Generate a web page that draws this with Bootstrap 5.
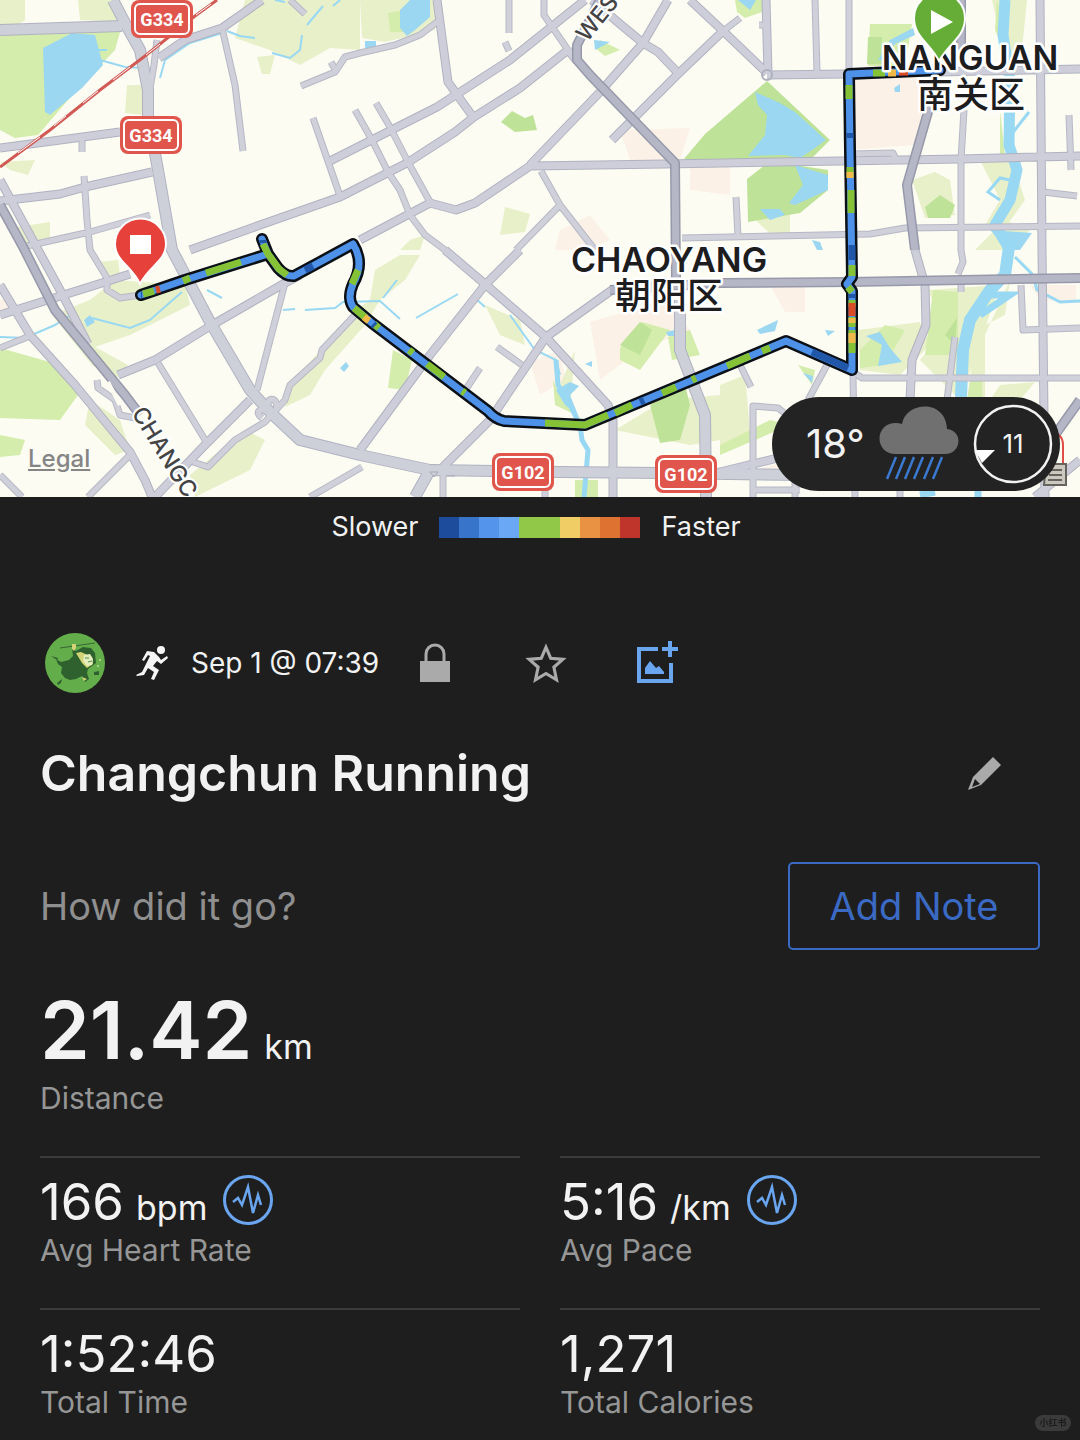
<!DOCTYPE html>
<html lang="en">
<head>
<meta charset="utf-8">
<meta name="viewport" content="width=device-width, initial-scale=1">
<title>Changchun Running</title>
<link href="https://cdn.jsdelivr.net/npm/bootstrap@5.3.0/dist/css/bootstrap.min.css" rel="stylesheet">
<style>
body { background: #1e1e1e; color: #f2f2f2; font-family: Inter, "Noto Sans CJK SC", sans-serif; }
svg { display: block; flex: none; }
.map-art { width: 100%; height: auto; }
.map-art text { font-family: Inter, "Noto Sans CJK SC", sans-serif; }
.place { font-size: 34px; font-weight: 600; fill: #1d1d1f; stroke: #fff; stroke-width: 5px; stroke-linejoin: round; paint-order: stroke; text-anchor: middle; }
.place-cn { font-size: 36px; font-weight: 500; }
.street { font-size: 23px; font-weight: 500; fill: #444; stroke: #fff; stroke-width: 4px; paint-order: stroke; }
.map-art .shield-text { font-family: Roboto, sans-serif; font-size: 18px; font-weight: 700; fill: #fff; text-anchor: middle; }
.legal { left: 28px; bottom: 24px; font-size: 24px; line-height: 28px; font-weight: 500; color: #858585; }
.weather { right: 20px; bottom: 6px; width: 288px; height: 94px; background: #232323; }
.temp { width: 73px; font-size: 40px; line-height: 48px; margin-left: 34px; }
.wind { margin-left: 14px; }
.speed-key { height: 60px; font-size: 27px; gap: 21px; padding-right: 8px; }
.speed-bar { width: 201px; height: 21px; }
.sheet { padding: 0 40px; }
.meta-row { height: 60px; margin-top: 76px; padding-left: 5px; }
.meta-sport { margin-left: 30px; }
.meta-date { font-size: 28px; line-height: 32px; width: 249px; padding-left: 20px; }
.icon-btn { background: none; border: 0; padding: 0; }
.star { margin-left: 75px; }
.photo { margin-left: 69px; }
.title { font-size: 50px; line-height: 60px; font-weight: 600; margin: 0; }
.title-row { margin-top: 50px; padding-right: 36px; }
.note-row { margin-top: 59px; font-size: 38px; }
.ask { color: #8f8f8f; }
.note-btn { --bs-btn-color: #3a6ac4; --bs-btn-border-color: #3a6ac4; --bs-btn-hover-color: #fff; --bs-btn-hover-bg: #3a6ac4; --bs-btn-border-radius: 5px; --bs-btn-border-width: 2px; width: 252px; height: 88px; font-size: 38px; padding: 0; }
.distance { margin-top: 36px; }
.distance-value { gap: 12px; }
.distance-value + .caption { margin-top: 7px; }
.big { font-size: 80px; line-height: 88px; font-weight: 600; }
.unit { font-size: 34px; line-height: 40px; }
.caption { font-size: 30px; line-height: 34px; color: #969696; }
.stats { --bs-gutter-x: 40px; margin-top: 41px; }
.stat { border-top: 2px solid #3c3c3c; height: 152px; padding-top: 13px; }
.value { font-size: 51px; line-height: 62px; }
.stat-line { height: 62px; gap: 12px; }
.stamp { right: 9px; bottom: 9px; width: 36px; height: 16px; font-size: 9px; line-height: 16px; background: #3b3b3b; color: #1c1c1c; font-weight: 700; }
</style>
<script src="https://cdn.jsdelivr.net/npm/bootstrap@5.3.0/dist/js/bootstrap.bundle.min.js"></script>
</head>
<body>
<section class="position-relative">
<svg class="map-art" viewBox="0 0 1080 497" role="img" aria-label="Route map">
<defs>
<g id="minor" fill="none" stroke-linejoin="round">
<path d="M157 40L154 65L148 100M243 151L235 85L222 28M82 138V152M84 176L87 220L90 250L107 278V290L120 298L140 295M27 246L90 232L150 215M313 118L340 196M301 86L335 72L345 57L360 53L395 45L420 35L437 22M331 62L336 71M290 0L305 14M509 0V33M505 42L509 51M355 110L372 140L388 172L400 190L410 215L425 235L445 250M376 103L390 127L408 162L430 202M544 0V15L568 50M682 238L870 234L905 228L1080 226M736 197L738 237M740 18L722 32M759 25H766M849 0V72M815 0L817 72M964 110L961 160V250L963 262L958 274M1069 115L1071 170M1043 192L1077 196M541 171L560 205L595 250M560 205L516 250M497 347L522 365M480 368L462 395M740 365L751 387M827 365L808 400M850 370L862 378H1080M853 375L855 497M955 337L947 400M961 275V292M1021 285L1023 330L1080 328M753 497V406L778 408L800 425M753 490H800M795 460V497M900 485V497M0 348L30 336M158 363L207 443M285 283L270 340L257 390M130 455L88 497M0 475L22 497M355 315L322 350L320 358L290 385L285 400L265 422L235 440L208 467L193 462M310 497L362 467M262 418C254 412 260 407 268 412M270 412C262 395 280 396 276 409M97 380L98 388L115 400L120 415L135 418M443 475V497M545 470V497M850 154L893 153L896 160"/>
</g>
<g id="mid" fill="none" stroke-linejoin="round">
<path d="M0 148L60 140L120 132M0 201L60 194L85 187L152 172M159 58L185 40L222 28L262 0M190 250L260 225L340 197L407 163L455 132L474 117L520 88L568 50M360 240L430 203L456 210L475 203L530 166L665 164L840 161L960 159L1080 156M330 161L437 107L510 60L585 0M437 0L448 82L473 117M568 50L577 61M530 165L600 92L643 43L668 0M592 0L620 24L643 43L658 52L677 72M690 0L722 30L767 73M722 32L677 75L612 140M766 0L768 73M767 75L845 74L1080 69M1040 0L1042 250L1045 497M445 250L485 284L546 337L608 405L613 420V497M520 250L485 285L430 355L360 450M612 290L546 337L490 420L440 470M915 250L925 285L926 325L912 360L910 400M0 315L105 282L130 274M0 285L15 310L30 335L75 385L130 452L145 480L152 497M118 375L155 360L212 325L285 283M285 283L300 275M250 400L205 445L155 497M0 180L60 290L88 344M720 472L790 455M1080 460L1035 497"/>
</g>
<g id="major" fill="none" stroke-linejoin="round">
<path d="M0 30L122 26M113 0L125 23L140 50L148 90V115L158 170L172 250L210 322L250 390L270 412L300 440L360 455L430 470L560 472L660 473L800 475M680 300V350L705 415L706 497M430 470L415 497"/>
</g>
<g id="trunk" fill="none" stroke-linejoin="round">
<path d="M0 205L22 245L55 310L125 395L140 415M600 0L577 45V60L590 75L675 163L676 280M930 105L907 185L915 250M610 290L720 283L850 282L1080 278M961 0V50M1080 400L1030 470"/>
</g>
<g id="shield">
<rect x="-31" y="-19" width="62" height="38" rx="8" fill="#e0554c"/>
<rect x="-27" y="-15" width="54" height="30" rx="5" fill="#e0554c" stroke="#fff" stroke-width="2"/>
</g>
</defs>
<rect width="1080" height="497" fill="#fcfcf3"/>
<g fill="#fcf1e7"><path d="M852 80L930 76L915 145L850 150ZM560 230L590 215L610 240L585 250H555ZM530 362L560 350L565 380L540 395ZM590 322L665 300L690 330L640 350L600 380ZM770 285H805V312H785ZM690 165L730 158V195L690 190ZM1030 285H1076V302L1040 300ZM755 470L790 460V480ZM0 300L12 295V310H0ZM620 130L690 128L680 160H630Z"/></g>
<g fill="#e8f0c9">
<path d="M0 0H25V20L10 30H0ZM78 0H115L122 22L80 20ZM245 0H360V50L330 48L300 65L270 50L235 38ZM360 0H435V30L385 42L362 38ZM127 85H143V115L125 113ZM257 57L275 55L270 74H262ZM0 162L35 160L28 175L10 170ZM17 227L50 222V240L25 245ZM505 207L530 214L525 232L500 235ZM410 240L425 235L420 250H400Z"/>
<path d="M52 315L90 300L115 280L185 285L190 305L130 335L95 347L128 365L115 380L92 365ZM98 262L118 260L120 275H105ZM335 335L350 315L370 300L375 270L400 255H420L405 280L380 300L365 325L325 370L310 395L285 407L293 380ZM245 430L265 440L250 470L195 497L190 475ZM90 400L120 420L130 450L115 455L85 425ZM485 305L520 320L525 345L500 335ZM575 350L560 385L570 410ZM615 430L665 400L720 395V440L690 445L640 435Z"/>
<path d="M912 180L935 172L950 180L955 215L925 218ZM980 160L1012 160L1025 200L1000 235L985 225L1000 200ZM992 0H1027L1022 50L1005 60ZM1005 220L1030 230L1010 250H975ZM928 290L1000 285L960 400L920 360L945 330ZM858 330L920 322L930 345L900 375L860 370ZM750 215H790V238H775ZM720 385L745 375L750 430L720 450ZM1000 385L1035 382L1020 400H990ZM1005 315L1010 280L985 335V400H968L975 330Z"/>
</g>
<g fill="#d5edac">
<path d="M0 32H120L115 50L75 92L38 135L15 138L0 130ZM0 348L50 362L78 395L60 420L0 418ZM0 435L25 440L20 455L0 457ZM388 13L404 10V32H390ZM600 40L620 50L605 56L595 48ZM620 348L642 322L670 330L640 370L620 360ZM668 337L690 330L700 355L672 360ZM393 350L412 360L405 390L388 388ZM933 290L958 292V355H925ZM735 0H762V12L745 18L737 12ZM870 24H912L905 66H868ZM997 0L1008 40V60L995 30ZM1000 110L1005 155H1000ZM720 445L770 420L790 425L720 455ZM553 380L562 400L580 417L555 405ZM798 365L815 370L812 385ZM970 380H982V400H967ZM575 480H598V497H575ZM860 350L885 325L905 330L885 365L860 368Z"/>
</g>
<g fill="#bee297"><path d="M684 159L705 134L767 81L830 140L810 160H752L740 165ZM747 179L765 165L795 165L828 170V190L800 213L748 222ZM501 122L512 111L525 118L533 115L537 130L515 132ZM925 207L940 195L955 205L950 218H928ZM868 37H882V64H867ZM650 405L685 385L690 405L680 440L660 443ZM620 345L640 322L652 330L640 355ZM945 335L957 318L955 345Z"/></g>
<g fill="#9bd7f1"><path d="M43 48L72 33L95 35L103 65L82 88L50 115L45 112ZM400 10L410 0H430V17L415 30L407 36L400 28ZM365 41H376V48H365ZM594 40L610 42L595 50ZM755 92L780 103L795 112L826 140L815 148L800 158L785 155L748 156L765 135L767 115L758 105ZM795 165L828 175V190L795 205L789 203L803 185ZM760 209H780L785 215L770 220ZM738 0H756L750 10ZM894 88L900 84V92H895ZM878 60L890 40L913 28L915 35L895 44L883 60ZM866 336L880 332L890 348L902 362L878 366L882 345ZM757 330L778 320L775 331L760 334ZM556 390L570 382L579 386L570 395L578 415L565 405ZM84 320L90 315L95 322L87 327ZM340 368L346 362L349 366L344 372ZM585 364L592 361V367ZM825 330L835 331L828 336ZM803 373L813 376L812 383ZM666 332L675 330V336H668ZM812 240L820 242L823 250H817ZM990 230L1032 233L1020 250H1010Z"/></g>
<g fill="none" stroke="#98d8f3" stroke-width="2">
<path d="M95 50H107M100 60L125 67L143 68M160 78L165 60L190 43L222 33M227 31L240 36L255 38M302 35L300 50L290 58L272 53M307 25L323 6M333 6L340 0M275 0L285 2M0 337L25 338L55 325L75 312M92 318L130 328L150 320L175 298L182 292M207 290L222 298M283 310L295 309M305 310L335 308L343 302L380 301L400 319M383 298L397 280M416 318L458 294M475 298L485 307M510 315L522 332L535 350L556 360L560 375"/>
<path d="M556 360L558 385L570 405L580 425L582 440L588 450L584 497" stroke-width="5"/>
<path d="M1005 0L1003 35L1010 80L1009 145L1017 170L1010 200L995 225L1010 250" stroke-width="11"/>
<path d="M1007 140L1029 112M1010 180L1000 178L988 192L1000 200M1015 257L1033 275L1037 290L1060 302L1080 301" stroke-width="3"/>
<path d="M1010 240L1005 275L990 290L970 320L963 350L961 397" stroke-width="12"/><path d="M990 295L1010 295L980 315M978 480V497M920 495L935 492" stroke-width="7"/>
</g>
<use href="#minor" stroke="#b6b8c5" stroke-width="7"/><use href="#mid" stroke="#b0b2c0" stroke-width="9"/><use href="#major" stroke="#b0b2c0" stroke-width="12"/>
<use href="#minor" stroke="#cfd0da" stroke-width="5"/><use href="#mid" stroke="#cdced9" stroke-width="7"/><use href="#major" stroke="#cdcfd9" stroke-width="10"/>
<use href="#trunk" stroke="#9799aa" stroke-width="10"/><use href="#trunk" stroke="#b5b7c6" stroke-width="7"/>
<g fill="none"><circle cx="767" cy="75" r="5" stroke="#aeb0be" stroke-width="2"/><path d="M108 382L120 405" stroke="#fcfcf3" stroke-width="4"/><path d="M430 472L438 472L434 477ZM447 476H455" stroke="#a7a8b8" stroke-width="1"/>
<path d="M0 167L50 130L100 90L145 56L195 16L217 0" stroke="#d15a55" stroke-width="3"/><path d="M18 153L40 137M54 126L66 116M83 103L98 91M113 80L130 67M146 55L160 44M196 15L211 4" stroke="#fff" stroke-width="1"/></g>
<text class="street" transform="translate(587 43) rotate(-51)">WES</text>
<text class="street" transform="translate(131 413) rotate(58)">CHANGC</text>
<g stroke-linecap="round" stroke-linejoin="round" fill="none">
<path d="M141 295L185 280L268 254L262 239L268 254L278 268Q286 277 294 276L320 262L353 244Q365 263 353 284Q347 298 353 307L372 323L488 411Q495 419 504 421L585 425L786 341L852 370V291L847 284L852 277L850 150L849 74L940 70" stroke="#0b1016" stroke-width="12"/>
<path d="M141 295L185 280L268 254L262 239L268 254L278 268Q286 277 294 276L320 262L353 244Q365 263 353 284Q347 298 353 307L372 323L488 411Q495 419 504 421L585 425L786 341L852 370V291L847 284L852 277L850 150L849 74L940 70" stroke="#4d91e8" stroke-width="7"/>
</g>
<g fill="none" stroke-width="7" stroke="#86c235">
<path d="M143 294L154 291M183 281L190 278M206 273L241 262M263 244L268 254L279 269L287 275M358 270L352 284M354 308L366 318M374 324L379 328M409 350L413 353M427 364L444 377M462 391L465 393M545 423L585 425L608 415M615 413L632 405M662 393L676 387M692 380L696 378M727 366L750 356M762 351L770 348M849 85V99M850 167V178M851 190V213M852 265V276M848 287L852 292M852 300V307M852 317V327M852 330V353M873 73H885"/>
<g stroke="#2057a8"><path d="M141 295L142 295M263 240V243M305 270L313 266M373 324L375 326M640 402L644 400M812 352L848 368M850 133V138M852 245V260M852 294V298"/></g>
<g stroke="#f1b94a"><path d="M364 317L369 321M850 172V178M852 318V323M852 333V343M888 73H896"/></g>
<path d="M156 290L160 289M852 303V316M899 72H908" stroke="#db4b26"/>
</g>
<text class="place" x="970" y="70">NANGUAN</text><text class="place place-cn" x="971" y="108">南关区</text><text class="place" x="669" y="272">CHAOYANG</text><text class="place place-cn" x="669" y="309">朝阳区</text>
<path d="M939 61C930 43 914 37 914 18A25.500 25.500 0 0 1 965 18C965 37 949 43 939 61Z" fill="#65ad37" stroke="#fff" stroke-width="2"/><path d="M931 10V34L953 22Z" fill="#fff"/>
<path d="M140 284C132 266 115 261 115 244A25.500 25.500 0 0 1 166 244C166 261 149 266 140 284Z" fill="#e7413b" stroke="#fff" stroke-width="2"/><path d="M130 235H151V254H130Z" fill="#fff"/>
<use href="#shield" x="162" y="19"/><text class="shield-text" x="162" y="26">G334</text>
<use href="#shield" x="151" y="135"/><text class="shield-text" x="151" y="142">G334</text>
<use href="#shield" x="523" y="472"/><text class="shield-text" x="523" y="479">G102</text>
<use href="#shield" x="686" y="474"/><text class="shield-text" x="686" y="481">G102</text>
<path d="M1050 433Q1063 433 1063 445V463" fill="none" stroke="#e14c45" stroke-width="2"/><path d="M1046 464H1066V485H1044Z" fill="#cbc8bd" stroke="#65645f" stroke-width="2"/><path d="M1050 470H1062M1049 475H1062M1048 480H1062" stroke="#65645f" stroke-width="2"/>
</svg>
<a class="legal position-absolute" href="#legal">Legal</a>
<div class="weather position-absolute rounded-pill d-flex align-items-center">
<span class="temp">18°</span>
<svg width="80" height="76" viewBox="0 0 80 76" aria-label="Rain"><path d="M17 48C-5 48-5 17 17 17Q20 17 23 18C27-5 67-7 68 23C85 25 82 48 66 48Z" fill="#707070"/><path d="M17 51L8 73M26 51L17 73M35 51L26 73M44 51L35 73M54 51L45 73M63 51L54 73" stroke="#3b78cf" stroke-width="2.500"/></svg>
<svg class="wind" width="80" height="80" viewBox="0 0 80 80" aria-label="Wind 11"><circle cx="40" cy="40" r="38" fill="none" stroke="#f2f2f2" stroke-width="2.500"/><path d="M2 46L22 46L9 59Z" fill="#fff"/><text x="40" y="49" fill="#f2f2f2" font-size="26" text-anchor="middle">11</text></svg>
</div>
</section>
<div class="speed-key d-flex justify-content-center align-items-center"><span>Slower</span>
<svg class="speed-bar" viewBox="0 0 201 21" preserveAspectRatio="none" aria-hidden="true"><path d="M0 0H201V21H0Z" fill="#bf342b"/><path d="M0 0H181V21H0Z" fill="#de7331"/><path d="M0 0H161V21H0Z" fill="#e99244"/><path d="M0 0H141V21H0Z" fill="#f0cd65"/><path d="M0 0H121V21H0Z" fill="#91c847"/><path d="M0 0H80V21H0Z" fill="#6aa8f6"/><path d="M0 0H60V21H0Z" fill="#5494eb"/><path d="M0 0H40V21H0Z" fill="#3974cb"/><path d="M0 0H20V21H0Z" fill="#1e4c9c"/></svg>
<span>Faster</span></div>
<main class="sheet">
<div class="meta-row d-flex align-items-center">
<svg width="60" height="60" viewBox="0 0 60 60" aria-label="Profile picture"><circle cx="30" cy="30" r="30" fill="#63ad4b"/><path d="M27 15L31 18L38 14L46 15L50 20L51 30L43 36L42 40L44 46L40 49L37 43L31 46L25 47L20 45L16 40L17 34L13 31L11 26L16 29L24 27L28 23ZM12 50L17 46L16 50L13 52ZM6 23L13 25L12 27ZM49 39L54 38V42L49 42Z" fill="#2f612f"/><path d="M15 15L50 10" stroke="#386534" stroke-width="1"/><path d="M27 11H31V15L29 18L27 16ZM31 20L36 19L47 24L48 31L42 35L37 30ZM37 44L42 46L39 48Z" fill="#d3d477"/><path d="M39 22L45 21L48 26L47 32L42 33L38 28Z" fill="#e5edbc"/><path d="M40 25H44M43 29L47 28" stroke="#4c8c57" stroke-width="1"/><circle cx="55" cy="27" r="1" fill="#b9dc93"/><circle cx="53" cy="33" r="1" fill="#b9dc93"/></svg>
<svg class="meta-sport" width="36" height="40" viewBox="0 0 36 40" aria-label="Running"><circle cx="26" cy="7" r="4" fill="#f5f5f5"/><path d="M12 8L19 9L24 14L26 17L32 13L33 15L26 21L22 18L18 23L24 27L19 37L16 36L19 29L13 25L9 32L2 33L1 32L7 29L12 19L15 13L13 12L9 18L7 17Z" fill="#f5f5f5"/></svg>
<span class="meta-date text-nowrap">Sep 1 @ 07:39</span>
<button class="icon-btn" aria-label="Privacy"><svg width="30" height="40" viewBox="0 0 30 40"><path d="M6 20V11A9 9 0 0 1 24 11V20" fill="none" stroke="#aaa" stroke-width="3"/><path d="M0 18H30V39H0Z" fill="#aaa"/></svg></button>
<button class="icon-btn star" aria-label="Favorite"><svg width="42" height="42" viewBox="0 0 40 40"><path d="M20 5L24.500 15.500L36 16.500L27.500 24L30 36L20 30L10 36L12.500 24L4 16.500L15.500 15.500Z" fill="none" stroke="#aaa" stroke-width="3"/></svg></button>
<button class="icon-btn photo" aria-label="Add photo"><svg width="44" height="44" viewBox="0 0 44 44"><path d="M22 8H3V40H35V22" fill="none" stroke="#69a6ef" stroke-width="4"/><path d="M26 8H42M34 0V16" stroke="#69a6ef" stroke-width="4"/><path d="M9 33V27L14 20L20 27L23 25L28 31V33Z" fill="#69a6ef"/></svg></button>
</div>
<div class="title-row d-flex justify-content-between align-items-center"><h1 class="title">Changchun Running</h1><button class="icon-btn" aria-label="Edit title"><svg width="38" height="38" viewBox="0 0 38 38"><path d="M27 3L35 11L15 31L2 36L7 23Z" fill="#aaa"/><path d="M9 25L14 30L6 33Z" fill="#1e1e1e"/></svg></button></div>
<div class="note-row d-flex justify-content-between align-items-center"><span class="ask">How did it go?</span><button class="btn note-btn">Add Note</button></div>
<div class="distance"><div class="distance-value d-flex align-items-baseline"><span class="big">21.42</span><span class="unit">km</span></div><div class="caption">Distance</div></div>
<div class="row stats">
<div class="col-6"><div class="stat"><div class="stat-line d-flex align-items-baseline"><span class="value">166</span><span class="unit">bpm</span><svg class="align-self-start ms-1 mt-1" width="50" height="50" viewBox="0 0 50 50"><circle cx="25" cy="25" r="23.500" fill="none" stroke="#6aa5ef" stroke-width="3"/><path d="M10 27L15 23L19 30L25 12L30 38L35 20L38 30" fill="none" stroke="#6aa5ef" stroke-width="2.500"/></svg></div><div class="caption">Avg Heart Rate</div></div></div>
<div class="col-6"><div class="stat"><div class="stat-line d-flex align-items-baseline"><span class="value">5:16</span><span class="unit">/km</span><svg class="align-self-start ms-1 mt-1" width="50" height="50" viewBox="0 0 50 50"><circle cx="25" cy="25" r="23.500" fill="none" stroke="#6aa5ef" stroke-width="3"/><path d="M10 27L15 23L19 30L25 12L30 38L35 20L38 30" fill="none" stroke="#6aa5ef" stroke-width="2.500"/></svg></div><div class="caption">Avg Pace</div></div></div>
<div class="col-6"><div class="stat"><div class="stat-line value">1:52:46</div><div class="caption">Total Time</div></div></div>
<div class="col-6"><div class="stat"><div class="stat-line value">1,271</div><div class="caption">Total Calories</div></div></div>
</div>
</main>
<div class="stamp position-fixed rounded-pill text-center">小红书</div>
</body>
</html>
